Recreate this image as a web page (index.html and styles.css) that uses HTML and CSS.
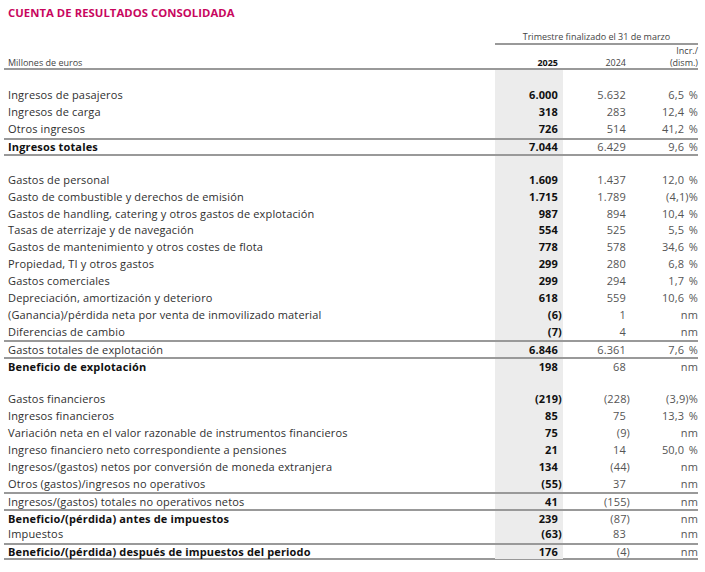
FILE: index.html
```html
<!DOCTYPE html>
<html lang="es">
<head>
<meta charset="utf-8">
<title>Cuenta de resultados consolidada</title>
<link rel="stylesheet" href="styles.css">
</head>
<body>
<div class="page">
  <h1 class="title">CUENTA DE RESULTADOS CONSOLIDADA</h1>
  <div class="head-top">
    <div class="period">Trimestre finalizado el 31 de marzo</div>
  </div>
  <div class="head-bottom">
    <div class="hl">Millones de euros</div>
    <div class="hc y25">2025</div>
    <div class="hc">2024</div>
    <div class="hc">Incr./<br>(dism.)</div>
  </div>
  <div class="rows">
    <div class="row"><div class="l"></div><div class="c y25"></div><div class="c"></div><div class="c"></div></div>
    <div class="row"><div class="l">Ingresos de pasajeros</div><div class="c y25">6.000</div><div class="c">5.632</div><div class="c p">6,5 %</div></div>
    <div class="row"><div class="l">Ingresos de carga</div><div class="c y25">318</div><div class="c">283</div><div class="c p">12,4 %</div></div>
    <div class="row"><div class="l">Otros ingresos</div><div class="c y25">726</div><div class="c">514</div><div class="c p">41,2 %</div></div>
    <div class="row line b"><div class="l">Ingresos totales</div><div class="c y25">7.044</div><div class="c">6.429</div><div class="c p">9,6 %</div></div>
    <div class="row line"><div class="l"></div><div class="c y25"></div><div class="c"></div><div class="c"></div></div>
    <div class="row"><div class="l">Gastos de personal</div><div class="c y25">1.609</div><div class="c">1.437</div><div class="c p">12,0 %</div></div>
    <div class="row"><div class="l">Gasto de combustible y derechos de emisión</div><div class="c y25">1.715</div><div class="c">1.789</div><div class="c p">(4,1)%</div></div>
    <div class="row"><div class="l">Gastos de handling, catering y otros gastos de explotación</div><div class="c y25">987</div><div class="c">894</div><div class="c p">10,4 %</div></div>
    <div class="row"><div class="l">Tasas de aterrizaje y de navegación</div><div class="c y25">554</div><div class="c">525</div><div class="c p">5,5 %</div></div>
    <div class="row"><div class="l">Gastos de mantenimiento y otros costes de flota</div><div class="c y25">778</div><div class="c">578</div><div class="c p">34,6 %</div></div>
    <div class="row"><div class="l">Propiedad, TI y otros gastos</div><div class="c y25">299</div><div class="c">280</div><div class="c p">6,8 %</div></div>
    <div class="row"><div class="l">Gastos comerciales</div><div class="c y25">299</div><div class="c">294</div><div class="c p">1,7 %</div></div>
    <div class="row"><div class="l">Depreciación, amortización y deterioro</div><div class="c y25">618</div><div class="c">559</div><div class="c p">10,6 %</div></div>
    <div class="row"><div class="l">(Ganancia)/pérdida neta por venta de inmovilizado material</div><div class="c y25"><span class="neg">(6)</span></div><div class="c">1</div><div class="c p">nm</div></div>
    <div class="row"><div class="l">Diferencias de cambio</div><div class="c y25"><span class="neg">(7)</span></div><div class="c">4</div><div class="c p">nm</div></div>
    <div class="row line"><div class="l">Gastos totales de explotación</div><div class="c y25">6.846</div><div class="c">6.361</div><div class="c p">7,6 %</div></div>
    <div class="row line b"><div class="l">Beneficio de explotación</div><div class="c y25">198</div><div class="c">68</div><div class="c p">nm</div></div>
    <div class="row"><div class="l"></div><div class="c y25"></div><div class="c"></div><div class="c"></div></div>
    <div class="row"><div class="l">Gastos financieros</div><div class="c y25"><span class="neg">(219)</span></div><div class="c"><span class="neg">(228)</span></div><div class="c p">(3,9)%</div></div>
    <div class="row"><div class="l">Ingresos financieros</div><div class="c y25">85</div><div class="c">75</div><div class="c p">13,3 %</div></div>
    <div class="row"><div class="l">Variación neta en el valor razonable de instrumentos financieros</div><div class="c y25">75</div><div class="c"><span class="neg">(9)</span></div><div class="c p">nm</div></div>
    <div class="row"><div class="l">Ingreso financiero neto correspondiente a pensiones</div><div class="c y25">21</div><div class="c">14</div><div class="c p">50,0 %</div></div>
    <div class="row"><div class="l">Ingresos/(gastos) netos por conversión de moneda extranjera</div><div class="c y25">134</div><div class="c"><span class="neg">(44)</span></div><div class="c p">nm</div></div>
    <div class="row"><div class="l">Otros (gastos)/ingresos no operativos</div><div class="c y25"><span class="neg">(55)</span></div><div class="c">37</div><div class="c p">nm</div></div>
    <div class="row line"><div class="l">Ingresos/(gastos) totales no operativos netos</div><div class="c y25">41</div><div class="c"><span class="neg">(155)</span></div><div class="c p">nm</div></div>
    <div class="row line b"><div class="l">Beneficio/(pérdida) antes de impuestos</div><div class="c y25">239</div><div class="c"><span class="neg">(87)</span></div><div class="c p">nm</div></div>
    <div class="row"><div class="l">Impuestos</div><div class="c y25"><span class="neg">(63)</span></div><div class="c">83</div><div class="c p">nm</div></div>
    <div class="row line line-bottom b"><div class="l">Beneficio/(pérdida) después de impuestos del periodo</div><div class="c y25">176</div><div class="c"><span class="neg">(4)</span></div><div class="c p">nm</div></div>
  </div>
</div>
</body>
</html>
```

FILE: styles.css
```css
html, body {
  margin: 0;
  padding: 0;
  background: #ffffff;
}

body {
  font-family: "Open Sans", "Liberation Sans", sans-serif;
  color: #333;
}

.page {
  width: 694px;
  padding: 0 0 0 4px;
}

.title {
  margin: 0;
  padding-left: 4px;
  height: 26px;
  line-height: 26px;
  font-size: 11.3px;
  font-weight: 700;
  color: #c8065e;
  letter-spacing: 0.05px;
}

.head-top {
  display: grid;
  grid-template-columns: 1fr 203px;
  padding-top: 5px;
}

.period {
  grid-column: 2;
  text-align: center;
  font-size: 9px;
  line-height: 12px;
  color: #444;
  border-bottom: 2px solid #999;
}

.head-bottom,
.row {
  display: grid;
  grid-template-columns: 1fr 68px 67px 68px;
}

.head-bottom {
  height: 25px;
  box-sizing: border-box;
  border-bottom: 2px solid #999;
  align-items: end;
  font-size: 9px;
  line-height: 11.5px;
  color: #444;
}

.hl {
  padding-left: 4px;
}

.hc {
  text-align: right;
}

.head-bottom .y25 {
  font-weight: 700;
  color: #111;
  padding-right: 5px;
}

.head-bottom .hc:nth-child(3) {
  padding-right: 4px;
}

.row {
  height: 16.9px;
  box-sizing: border-box;
  align-items: center;
  font-size: 11px;
  line-height: 14px;
  letter-spacing: 0.15px;
}

.row.line {
  border-top: 2px solid #999;
}

.row.line-bottom {
  border-bottom: 2px solid #999;
}

.l {
  padding-left: 4px;
  white-space: nowrap;
  color: #2f2f2f;
}

.row.b .l {
  font-weight: 700;
  color: #111;
}

.c {
  text-align: right;
  color: #555;
  padding-right: 4px;
}

.c.p {
  padding-right: 0;
  word-spacing: 1.5px;
}

.c.y25 {
  align-self: stretch;
  display: flex;
  align-items: center;
  justify-content: flex-end;
  background: #ececec;
  font-weight: 700;
  color: #111;
  padding-right: 5px;
}

.neg {
  margin-right: -4px;
}
```
